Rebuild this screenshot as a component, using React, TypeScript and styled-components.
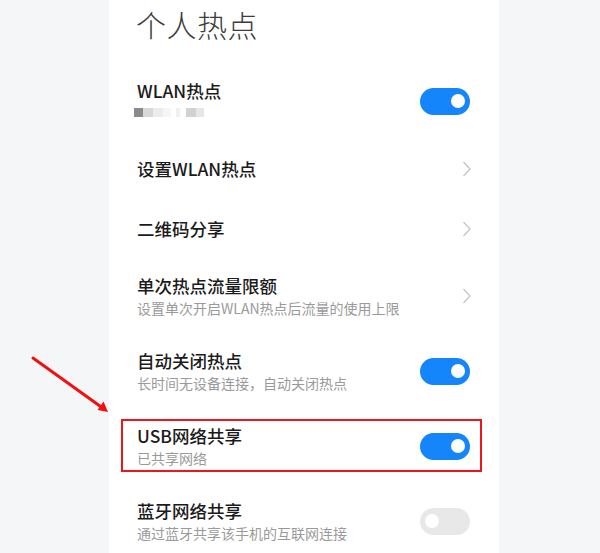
import React from "react";
import styled, { createGlobalStyle } from "styled-components";

const Global = createGlobalStyle`
  html, body { margin: 0; padding: 0; background: #f5f6f8; }
  body { font-family: "Noto Sans CJK SC", "Noto Sans", sans-serif; }
  * { box-sizing: border-box; }
`;

const Page = styled.div`
  position: relative;
  width: 600px;
  height: 553px;
  overflow: hidden;
  background: #f5f6f8;
  padding-left: 109px;
`;

const Panel = styled.div`
  width: 390px;
  height: 100%;
  background: #ffffff;
  display: flex;
  flex-direction: column;
`;

const Header = styled.div`
  height: 63.5px;
  padding: 4px 0 0 27px;
  flex-shrink: 0;
`;

const Title = styled.h1`
  margin: 0;
  font-size: 30px;
  line-height: 40px;
  font-weight: 300;
  color: #3c3c3c;
  letter-spacing: 0.5px;
`;

const Row = styled.div<{ $h: number }>`
  position: relative;
  height: ${(p) => p.$h}px;
  flex-shrink: 0;
  display: flex;
  align-items: center;
  justify-content: space-between;
  padding: 0 29px 0 28px;
`;

const Texts = styled.div`
  display: flex;
  flex-direction: column;
`;

const RowTitle = styled.div`
  font-size: 17.5px;
  line-height: 22px;
  font-weight: 500;
  color: #1b1b1b;
`;

const RowSub = styled.div`
  font-size: 14px;
  line-height: 20px;
  color: #9a9a9a;
  margin-top: 1px;
`;

const Mosaic = styled.div`
  display: flex;
  height: 20px;
  align-items: center;
  margin-left: -3px;
`;

const Cell = styled.span<{ $c: string; $w: number }>`
  display: block;
  width: ${(p) => p.$w}px;
  height: 9px;
  background: ${(p) => p.$c};
`;

const Track = styled.div<{ $on: boolean }>`
  position: relative;
  width: 50px;
  height: 27px;
  border-radius: 14px;
  background: ${(p) => (p.$on ? "#1485fb" : "#e8e8e8")};
  flex-shrink: 0;
`;

const Knob = styled.div<{ $on: boolean }>`
  position: absolute;
  top: 6.5px;
  left: ${(p) => (p.$on ? "31px" : "5px")};
  width: 14px;
  height: 14px;
  border-radius: 50%;
  background: #ffffff;
`;

const Chevron = styled.svg`
  width: 9px;
  height: 16px;
  margin-right: -1px;
  flex-shrink: 0;
`;

const Highlight = styled.div`
  position: absolute;
  left: 12px;
  right: 17px;
  top: 10.5px;
  bottom: 11.5px;
  border: 2px solid #f0141e;
  pointer-events: none;
`;

const Arrow = styled.svg`
  position: absolute;
  left: 0;
  top: 0;
  width: 600px;
  height: 553px;
  pointer-events: none;
`;

const Switch = ({ on }: { on: boolean }) => (
  <Track $on={on}>
    <Knob $on={on} />
  </Track>
);

const Arr = () => (
  <Chevron viewBox="0 0 9 16">
    <path d="M1.5 1 L8 8 L1.5 15" fill="none" stroke="#c4c4c4" strokeWidth="1.3" />
  </Chevron>
);

export default function App() {
  return (
    <>
      <Global />
      <Page>
        <Panel>
          <Header>
            <Title>个人热点</Title>
          </Header>
          <Row $h={75}>
            <Texts>
              <RowTitle>WLAN热点</RowTitle>
              <Mosaic>
                <Cell $c="#8a8a8a" $w={9} />
                <Cell $c="#d8d8d8" $w={10} />
                <Cell $c="#ececec" $w={10} />
                <Cell $c="#f6f6f6" $w={8} />
                <Cell $c="#ffffff" $w={5} />
                <Cell $c="#f0f0f0" $w={4} />
                <Cell $c="#ffffff" $w={6} />
                <Cell $c="#d2d2d2" $w={10} />
                <Cell $c="#e7e7e7" $w={8} />
              </Mosaic>
            </Texts>
            <Switch on />
          </Row>
          <Row $h={60}>
            <RowTitle>设置WLAN热点</RowTitle>
            <Arr />
          </Row>
          <Row $h={60}>
            <RowTitle>二维码分享</RowTitle>
            <Arr />
          </Row>
          <Row $h={75}>
            <Texts>
              <RowTitle>单次热点流量限额</RowTitle>
              <RowSub>设置单次开启WLAN热点后流量的使用上限</RowSub>
            </Texts>
            <Arr />
          </Row>
          <Row $h={75}>
            <Texts>
              <RowTitle>自动关闭热点</RowTitle>
              <RowSub>长时间无设备连接，自动关闭热点</RowSub>
            </Texts>
            <Switch on />
          </Row>
          <Row $h={75}>
            <Texts>
              <RowTitle>USB网络共享</RowTitle>
              <RowSub>已共享网络</RowSub>
            </Texts>
            <Switch on />
            <Highlight />
          </Row>
          <Row $h={75}>
            <Texts>
              <RowTitle>蓝牙网络共享</RowTitle>
              <RowSub>通过蓝牙共享该手机的互联网连接</RowSub>
            </Texts>
            <Switch on={false} />
          </Row>
        </Panel>
        <Arrow viewBox="0 0 600 553">
          <line x1="33" y1="358" x2="102" y2="407.5" stroke="#f21010" strokeWidth="3" strokeLinecap="round" />
          <polygon points="108,412 97.5,410 103.5,401.5" fill="#f21010" />
        </Arrow>
      </Page>
    </>
  );
}
